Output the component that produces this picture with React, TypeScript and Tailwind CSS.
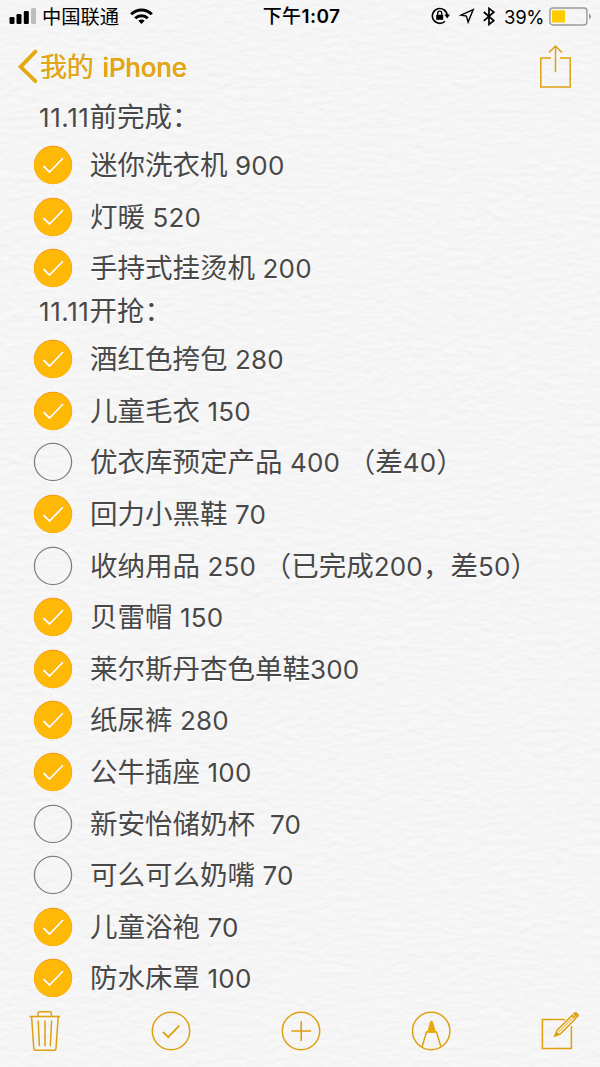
import { Fragment, type ReactNode } from "react";

type Item = { text: string; done: boolean };
type Section = { title: string; items: Item[] };

const sections: Section[] = [
    {
        title: "11.11前完成：",
        items: [
            { text: "迷你洗衣机 900", done: true },
            { text: "灯暖 520", done: true },
            { text: "手持式挂烫机 200", done: true },
        ],
    },
    {
        title: "11.11开抢：",
        items: [
            { text: "酒红色挎包 280", done: true },
            { text: "儿童毛衣 150", done: true },
            { text: "优衣库预定产品 400 （差40）", done: false },
            { text: "回力小黑鞋 70", done: true },
            { text: "收纳用品 250 （已完成200，差50）", done: false },
            { text: "贝雷帽 150", done: true },
            { text: "莱尔斯丹杏色单鞋300", done: true },
            { text: "纸尿裤 280", done: true },
            { text: "公牛插座 100", done: true },
            { text: "新安怡储奶杯  70", done: false },
            { text: "可么可么奶嘴 70", done: false },
            { text: "儿童浴袍 70", done: true },
            { text: "防水床罩 100", done: true },
        ],
    },
];

// Chinese runs are set slightly larger than the digits next to them
function MixedText({ text }: { text: string }) {
    return (
        <>
            {text.split(/([\u3000-\u9fff\uff00-\uffef]+)/).map((part, i) =>
                i % 2 ? (
                    <span key={i} className="text-[27.5px] tracking-normal">{part}</span>
                ) : (
                    <Fragment key={i}>{part}</Fragment>
                )
            )}
        </>
    );
}

function CheckCircle({ done }: { done: boolean }) {
    return (
        <svg className="h-10 w-10 shrink-0" viewBox="0 0 40 40" fill="none">
            {done ? (
                <>
                    <circle cx="20" cy="20.7" r="19" fill="#fff" />
                    <circle cx="20" cy="20" r="19.2" fill="#f58a1c" />
                    <circle cx="20" cy="20.4" r="18.9" fill="#fdb906" />
                    <path d="M10.5 20.5l6 6 13.5-14" stroke="#e89a1a" strokeWidth="1.8" />
                    <path d="M10.5 21l6 6 13.5-14" stroke="#fff" strokeWidth="1.8" />
                </>
            ) : (
                <>
                    <circle cx="20" cy="20.8" r="18.7" stroke="#fff" strokeWidth="1" />
                    <circle cx="20" cy="20" r="18.6" stroke="#808080" strokeWidth="1.3" />
                </>
            )}
        </svg>
    );
}

function ToolIcon({ children }: { children: ReactNode }) {
    return (
        <svg className="h-10 w-10 overflow-visible" viewBox="0 0 40 40" fill="none" stroke="#dfa010" strokeWidth="1.5">
            {children}
        </svg>
    );
}

function PaperTexture() {
    return (
        <svg className="pointer-events-none absolute inset-0 h-full w-full" aria-hidden="true">
            <filter id="paper" x="0" y="0" width="100%" height="100%" colorInterpolationFilters="sRGB">
                <feTurbulence type="fractalNoise" baseFrequency="0.08 0.16" numOctaves="3" seed="8" />
                <feColorMatrix values="0 0 0 0 0  0 0 0 0 0  0 0 0 0 0  1 0 0 0 0" />
                <feDiffuseLighting surfaceScale="0.3" diffuseConstant="0.98" lightingColor="#fff">
                    <feDistantLight azimuth="270" elevation="79" />
                </feDiffuseLighting>
            </filter>
            <rect width="100%" height="100%" filter="url(#paper)" />
        </svg>
    );
}

function StatusBar() {
    return (
        <div className="flex h-8 items-center text-black">
            <div className="flex flex-1 items-center pl-[9px]">
                <svg className="h-4 w-7" viewBox="0 0 28 16">
                    <rect x="0.5" y="9" width="5" height="7" rx="1.2" />
                    <rect x="7.5" y="6" width="5" height="10" rx="1.2" />
                    <rect x="14.8" y="3" width="5" height="13" rx="1.2" />
                    <rect x="22" y="0" width="5" height="16" rx="1.2" fill="#bdbdbd" />
                </svg>
                <span className="ml-[5px] pt-0.5 text-[19.3px] leading-8">中国联通</span>
                <svg className="ml-[11px] h-4 w-[23px]" viewBox="0 0 23 16" fill="none" stroke="#000" strokeWidth="3">
                    <path d="M1.2 6.2a14.6 14.6 0 0 1 20.6 0" />
                    <path d="M5.2 10.2a9 9 0 0 1 12.6 0" />
                    <path d="M11.5 16l-3.2-3.2a4.6 4.6 0 0 1 6.4 0z" fill="#000" stroke="none" />
                </svg>
            </div>
            <span className="w-20 pt-0.5 pl-0.5 text-center text-[19px] font-semibold leading-8 tracking-[0.4px] whitespace-nowrap">
                <span className="font-medium">下午</span>1:07
            </span>
            <div className="flex flex-1 items-center justify-end pr-2">
                <svg className="h-[18px] w-[19px]" viewBox="0 0 19 18" fill="none" stroke="#000" strokeWidth="1.6">
                    <path d="M14 14.2a7.4 7.4 0 1 1 2.2-5.4" />
                    <path d="M13.4 7.6h5.6l-2.8 4z" fill="#000" stroke="none" />
                    <rect x="5.2" y="7.8" width="7" height="5" fill="#000" stroke="none" />
                    <path d="M6.7 8V6.2a2 2 0 0 1 4 0V8" strokeWidth="1.3" />
                </svg>
                <svg className="ml-[9px] h-4 w-4" viewBox="0 0 16 16" fill="none" stroke="#000" strokeWidth="1.4">
                    <path d="M14.2 1.6L2 7.2l5.4.9 1.7 6z" />
                </svg>
                <svg className="ml-2 h-[19px] w-3" viewBox="0 0 12 19" fill="none" stroke="#000" strokeWidth="1.7">
                    <path d="M0.8 5l10 8.6L6 17.4V1.4l4.8 3.8-10 8.6" />
                </svg>
                <span className="ml-[9px] w-[41px] pt-0.5 text-[18.5px] leading-8 tracking-[-0.3px]">39%</span>
                <svg className="ml-1 h-[19px] w-[43px]" viewBox="0 0 43 19">
                    <rect x="0.9" y="1" width="37" height="17" rx="3" fill="none" stroke="#999" strokeWidth="1.4" />
                    <rect x="3" y="3.3" width="13" height="12.2" fill="#fc0" />
                    <path d="M40 6.5q4 3 0 6z" fill="#999" />
                </svg>
            </div>
        </div>
    );
}

function NavBar() {
    return (
        <div className="flex h-[68px] items-center justify-between pr-7 pl-[17px] text-[#e3a812]">
            <div className="flex items-center">
                <svg className="h-9 w-[22px]" viewBox="0 0 22 36" fill="none" stroke="currentColor" strokeWidth="3.8" strokeLinecap="round">
                    <path d="M18.4 3.6L3.6 18.8l14.8 14.4" />
                </svg>
                <span className="ml-px pt-[3px] text-[26px] font-medium leading-9 tracking-[-0.2px] [word-spacing:2.2px] [text-shadow:0_-0.5px_0_#c98a20,0_1px_0_#fff]">
                    <span className="text-[27px] font-normal">我的</span> iPhone
                </span>
            </div>
            <svg className="h-11 w-8" viewBox="0 0 32 44" fill="none" stroke="#dfa010" strokeWidth="1.5">
                <path d="M11 14H.8v29h29.4V14H20M15.5 28V2M9 8.5L15.5 2 22 8.5" />
            </svg>
        </div>
    );
}

function Toolbar() {
    return (
        <div className="flex h-[70px] items-start justify-between pt-[14px] pr-[19px] pl-[21px]">
            <ToolIcon>
                <path d="M8.6 5.5h30.5" strokeWidth="1.6" />
                <path d="M17 5V2.3Q17 .8 18.5.8h10.4q1.5 0 1.5 1.5V5" />
                <path d="M10.6 6l2.2 31.4q.1 1.8 1.9 1.8h18.4q1.8 0 1.9-1.8L37.2 6M17.2 9.5l1.2 25.8M24 9.5v25.8M30.6 9.5l-1.3 25.8" />
            </ToolIcon>
            <ToolIcon>
                <circle cx="20" cy="20" r="18.7" />
                <path d="M12 20.8l5.2 5.4L28.3 14.7" strokeWidth="1.8" />
            </ToolIcon>
            <ToolIcon>
                <circle cx="20" cy="20" r="18.7" />
                <path d="M10.3 20h19.8M20.2 10.2v19.8" strokeWidth="1.6" />
            </ToolIcon>
            <ToolIcon>
                <circle cx="20.2" cy="20" r="18.7" />
                <path d="M11 36L15.5 21h10L30 36" />
                <path d="M19.2 10.3q1.3-1.2 2.6 0L25 21.6h-9z" fill="#e3aa0c" stroke="none" />
            </ToolIcon>
            <ToolIcon>
                <path d="M24.2 8.6H1.4v29h29V15" />
                <path d="M31.3 4.2l3.4 3.4L19.4 22.8l-5.6 2.4 2.1-5.7z" />
                <path d="M13.2 25.8l2.2-5.4 3.4 3.4zM31.8 2.8l1.1-1.1q1.6-1.4 3.2 0l1 1q1.5 1.6 0 3.2l-1.2 1.2z" fill="#dfa010" stroke="none" />
                <path d="M17.5 21.2L32.8 5.8" strokeWidth="1" />
            </ToolIcon>
        </div>
    );
}

export default function App() {
    return (
        <div className="relative h-[1067px] w-[600px] overflow-hidden bg-[#f5f5f5] font-['Inter','Noto_Sans_CJK_SC',sans-serif]">
            <PaperTexture />
            <div className="relative flex h-full flex-col">
                <StatusBar />
                <NavBar />
                <main className="mb-[0.5px] h-[896.5px] overflow-hidden text-[26px] text-[#484848] [text-shadow:0_1px_1px_#fff]">
                    {sections.map((section) => (
                        <section key={section.title}>
                            <h2 className="h-[39.3px] pl-[39px] leading-[34px] tracking-[0.6px] whitespace-pre">
                                <MixedText text={section.title} />
                            </h2>
                            <ul>
                                {section.items.map((item) => (
                                    <li key={item.text} className="flex h-[51.6px] items-center gap-[17px] pl-[33px]">
                                        <CheckCircle done={item.done} />
                                        <span className="pt-px leading-9 tracking-[0.2px] whitespace-pre">
                                            <MixedText text={item.text} />
                                        </span>
                                    </li>
                                ))}
                            </ul>
                        </section>
                    ))}
                </main>
                <Toolbar />
            </div>
        </div>
    );
}
